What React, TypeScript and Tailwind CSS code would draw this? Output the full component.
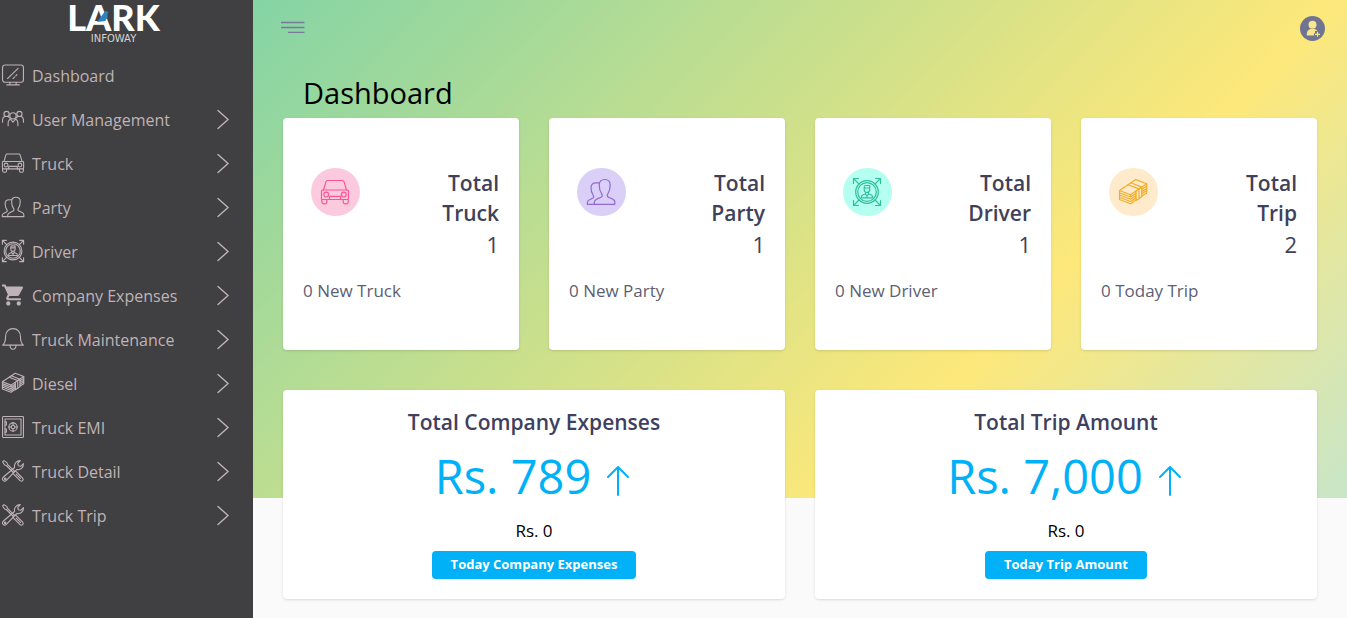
import type { ReactNode } from "react";
import { MdShoppingCart } from "react-icons/md";

type IconName =
  | "monitor"
  | "group"
  | "car"
  | "users"
  | "driver"
  | "cart"
  | "bell"
  | "money"
  | "safe"
  | "tools";

const drawings: Record<Exclude<IconName, "cart">, ReactNode> = {
  monitor: (
    <>
      <rect x="0.7" y="1.2" width="26.6" height="22" rx="3.2" />
      <path d="M10 23.4v3M18 23.4v3M6 26.6h16M7 18.5 20.5 5.5M14 18.5l2.2-2.2M17.5 15l1.5-1.5" />
    </>
  ),
  group: (
    <>
      <circle cx="14" cy="10" r="4" />
      <path d="M7.800 22.500v-3c0-3 1.600-5 4-5.700M20.200 22.500v-3c0-3-1.600-5-4-5.700" />
      <path d="M10.500 14 14 18l3.500-4" />
      <circle cx="5.800" cy="7.600" r="3.300" />
      <circle cx="22.200" cy="7.600" r="3.300" />
      <path d="M.7 18v-3c0-2.300 1.200-3.700 3-4.400M27.300 18v-3c0-2.300-1.200-3.700-3-4.400M7.700 10.500l2 2M20.300 10.500l-2 2" />
    </>
  ),
  car: (
    <>
      <path d="M2.500 12 5 3.700Q5.500 2.500 6.500 2.500h15q1 0 1.500 1.200L25.500 12" />
      <rect x="0.500" y="12" width="27" height="9.500" rx="1" />
      <circle cx="5.200" cy="16.600" r="2.400" />
      <circle cx="22.800" cy="16.600" r="2.400" />
      <path d="M8.500 21.500v-3.200h11v3.200M.8 21.500V24q0 1.800 1.800 1.800H4q1.800 0 1.800-1.800v-2.500M22.200 21.500V24q0 1.800 1.800 1.800h1.400q1.800 0 1.800-1.800v-2.500" />
    </>
  ),
  users: (
    <>
      <path d="M7.300 26.300h20.500V24c0-1.700-1-2.500-2.800-3.200l-3.500-1.600c-1.500-.7-1.500-2.200-.7-3.400 1.700-2.300 2.400-5.300 2.400-8.800 0-3.700-2-5.500-5.500-5.500S12.200 3.300 12.200 7c0 3.500.8 6.500 2.500 8.800.8 1.200.7 2.700-.7 3.400l-3.700 1.700c-1.900.9-3 1.600-3 3.300z" />
      <path d="M7.300 26.300H.4v-1.800c0-1.500.8-2.200 2.600-3l2.600-1.200c1.400-.8 1.400-1.800.4-3.300-1.200-2-2-4.500-2-7.200 0-3.300 2-5 5.200-5h3" />
    </>
  ),
  driver: (
    <>
      <circle cx="14" cy="14" r="11.300" />
      <circle cx="14" cy="14" r="9.300" />
      <path d="M6 6 .7.7M.5 5.500v-5h5M22 6 27.300.7M22.500.5h5v5M6 22 .7 27.300M.5 22.500v5h5M22 22l5.300 5.300M27.500 22.500v5h-5" />
      <path d="M11.200 11.500V9q0-1.500 1.500-1.500h4V11.500q0 2.800-2.800 2.800t-2.700-2.800zM11.200 10h5.500M12.500 14v2M15.500 14v2M8.500 19.800v-1q0-1.600 1.500-2l2.500-.8L14 18l1.500-2 2.500.8q1.500.4 1.500 2v1zM14 18v1.800" />
    </>
  ),
  bell: (
    <>
      <path d="M.8 21.800C3.500 19.500 4.500 17 4.500 11c0-6 3.900-10.200 9.500-10.200S23.500 5 23.500 11c0 6 1 8.500 3.700 10.800z" />
      <path d="M10.200 22c0 3.300 1.300 5 3.800 5s3.800-1.700 3.800-5" />
    </>
  ),
  money: (
    <>
      <path d="M.5 12.500 16.800 1.600 27.700 5.800 11.500 16.700z" />
      <path d="M9 6.700l11 4.200v10M11.800 4.800l11 4.300v9.500l-3 2.200M20 10.900l2.800-1.800M17 13v9.500l2.800-1.700" />
      <path d="M.5 12.500v2.300L11.500 19l5.500-3.700M.5 14.800V17l11 4.300 5.500-3.700M.5 17v2.200l11 4.300L17 19.800M.5 19.200v2.300l11 4.300L17 22M11.500 16.700v2.300" />
      <path d="M27.700 5.800v2.300L23 11.200M27.700 8.100v2.300L23 13.500M27.700 10.400v2.200L23 15.800M27.700 12.600v2.300L23 18" />
    </>
  ),
  safe: (
    <>
      <rect x="0.700" y="0.700" width="26.600" height="26.600" rx="1" />
      <rect x="3.800" y="3.800" width="20.400" height="20.400" />
      <circle cx="14" cy="14" r="5.300" />
      <circle cx="14" cy="14" r="2.300" />
      <path d="M14 8.700v3M14 16.300v3M8.700 14h3M16.300 14h3M3.800 7.500h1.800v4H3.800M3.800 16.500h1.800v4H3.800" />
    </>
  ),
  tools: (
    <>
      <path d="M.8 2.500 2.500.8l3.800 2.500.7 2.200 9 9M.8 2.500l2.500 3.800 2.200.7 9 9" />
      <path d="M15.500 14.500q1.500-.8 2.500.2l8.300 8.300q1.500 1.700 0 3.300t-3.300 0L14.700 18q-1-1-.2-2.500M18 18l5.500 5.500" />
      <path d="M16 9.500C15 5 18 .8 23.300.8L20 4.200l.8 3 3 .8 3.500-3.300c.2 5-3.800 8.500-8.600 7.400L5.500 26q-2 1.800-4 0t0-4z" />
      <circle cx="4" cy="24" r="1" />
    </>
  ),
};

function Icon({ name, className }: { name: IconName; className: string }) {
  if (name === "cart") {
    return (
      <svg viewBox="1 2 21 20" className={className} fill="currentColor" aria-hidden="true">
        <MdShoppingCart size={24} />
      </svg>
    );
  }
  return (
    <svg
      viewBox="0 0 28 28"
      className={className}
      fill="none"
      stroke="currentColor"
      strokeLinejoin="round"
      strokeLinecap="round"
      aria-hidden="true"
    >
      {drawings[name]}
    </svg>
  );
}

const menu: { label: string; icon: IconName; nested: boolean }[] = [
  { label: "Dashboard", icon: "monitor", nested: false },
  { label: "User Management", icon: "group", nested: true },
  { label: "Truck", icon: "car", nested: true },
  { label: "Party", icon: "users", nested: true },
  { label: "Driver", icon: "driver", nested: true },
  { label: "Company Expenses", icon: "cart", nested: true },
  { label: "Truck Maintenance", icon: "bell", nested: true },
  { label: "Diesel", icon: "money", nested: true },
  { label: "Truck EMI", icon: "safe", nested: true },
  { label: "Truck Detail", icon: "tools", nested: true },
  { label: "Truck Trip", icon: "tools", nested: true },
];

const stats: { subject: string; value: number; note: string; icon: IconName; tone: string }[] = [
  { subject: "Truck", value: 1, note: "0 New Truck", icon: "car", tone: "bg-[#fbcbdd] text-[#fb5597]" },
  { subject: "Party", value: 1, note: "0 New Party", icon: "users", tone: "bg-[#dacff6] text-[#9368cf]" },
  { subject: "Driver", value: 1, note: "0 New Driver", icon: "driver", tone: "bg-[#b5fff0] text-[#2fbf9c]" },
  { subject: "Trip", value: 2, note: "0 Today Trip", icon: "money", tone: "bg-[#ffebcb] text-[#efae2c]" },
];

const totals = [
  { title: "Total Company Expenses", amount: "Rs. 789", today: "Rs. 0", action: "Today Company Expenses" },
  { title: "Total Trip Amount", amount: "Rs. 7,000", today: "Rs. 0", action: "Today Trip Amount" },
];

function Logo() {
  return (
    <a href="#" className="flex h-[54px] flex-col items-center pr-[26px] text-white">
      <span className="relative font-[Lato,sans-serif] text-[36px] leading-[34px] font-black">
        LARK
        <svg viewBox="0 0 12 13" className="absolute top-[10px] left-[30px] h-[13px] w-[12px]" aria-hidden="true">
          <path d="M0 12 6 4 8.500.5l1.500 1 2 .5-1.500 1.500.2 3.500-2.500 4-3.500.5z" fill="#2e82bd" />
        </svg>
      </span>
      <span className="font-['DejaVu_Sans',sans-serif] text-[10px] leading-[10px] text-[#d5d5d5]">INFOWAY</span>
    </a>
  );
}

function Sidebar() {
  return (
    <aside className="w-[253px] shrink-0 bg-[#403f41] text-[#bfb3b7]">
      <Logo />
      <nav>
        <ul>
          {menu.map((item) => (
            <li key={item.label}>
              <a href="#" className="flex h-11 items-center gap-2 pr-6 pl-[2px] text-[16px]">
                <Icon name={item.icon} className="mb-[2px] size-[22px] overflow-visible stroke-[1.4]" />
                <span className="flex-1">{item.label}</span>
                {item.nested && (
                  <svg
                    viewBox="0 0 12 20"
                    className="h-5 w-3 overflow-visible"
                    fill="none"
                    stroke="currentColor"
                    strokeWidth="1.400"
                    strokeLinecap="round"
                    aria-hidden="true"
                  >
                    <path d="M1 .5 11 9.500 1 18.500" />
                  </svg>
                )}
              </a>
            </li>
          ))}
        </ul>
      </nav>
    </aside>
  );
}

function Header() {
  return (
    <header className="flex h-14 items-center justify-between pr-[22px] pl-7">
      <button type="button" aria-label="Toggle menu">
        <svg viewBox="0 0 24 12" className="mb-[2px] h-3 w-6" stroke="#79799b" strokeWidth="1.300" aria-hidden="true">
          <path d="M0 1.500h23.500M0 6.500h23.500M7 11.500h16.500" />
        </svg>
      </button>
      <button type="button" aria-label="Account">
        <svg viewBox="0 0 25 25" className="size-[25px]" aria-hidden="true">
          <circle cx="12.500" cy="12.500" r="12.500" fill="#6f7492" />
          <circle cx="12.500" cy="8.800" r="4" fill="#f8e68a" />
          <path d="M6.800 19.500v-1.500c0-3 1.800-4.700 4-5h3.400c1.500.3 2.500.9 3.200 2h-2.400v2.300H14v2.200z" fill="#f8e68a" />
          <path d="M17.500 15.800v5M15 18.300h5" stroke="#f8e68a" strokeWidth="1.200" />
        </svg>
      </button>
    </header>
  );
}

export default function App() {
  return (
    <div className="flex min-h-screen bg-[#fafafa] font-['Open_Sans','Noto_Sans',sans-serif]">
      <Sidebar />
      <div className="min-w-0 flex-1 bg-[linear-gradient(135deg,#84d4a5,#fde87a_68%,#c8e6c9)] bg-[length:100%_498px] bg-no-repeat">
        <Header />
        <main className="px-[30px] pt-[19px] pb-[18px]">
          <h1 className="mb-[7px] pl-5 text-[29px] leading-9 text-black">Dashboard</h1>
          <section className="grid grid-cols-4 gap-[30px]">
            {stats.map((stat) => (
              <article key={stat.subject} className="rounded bg-white px-5 pt-[50px] pb-[47px] text-[#3f4159] shadow-sm">
                <div className="flex items-start justify-between">
                  <div className={`ml-2 flex h-12 w-[49px] items-center justify-center rounded-full pr-px ${stat.tone}`}>
                    <Icon name={stat.icon} className="size-7 overflow-visible stroke-[1.2]" />
                  </div>
                  <div className="text-right">
                    <h2 className="text-[21px] leading-[30px] font-semibold">
                      Total
                      <br />
                      {stat.subject}
                    </h2>
                    <p className="text-[22px] leading-8">{stat.value}</p>
                  </div>
                </div>
                <p className="mt-[19px] text-[17px] leading-6 text-[#5d5f72]">{stat.note}</p>
              </article>
            ))}
          </section>
          <section className="mt-10 grid grid-cols-2 gap-[30px]">
            {totals.map((total) => (
              <article key={total.title} className="flex flex-col items-center rounded bg-white pt-4 pb-5 shadow-sm">
                <h2 className="text-[21px] leading-8 font-semibold text-[#3f4060]">{total.title}</h2>
                <p className="mt-[2px] flex items-center gap-4 pr-1 text-[47px] leading-[72px] text-[#00b1f7]">
                  {total.amount}
                  <svg
                    viewBox="0 0 22 30"
                    className="mt-[10px] h-[30px] w-[22px] overflow-visible"
                    fill="none"
                    stroke="currentColor"
                    strokeWidth="2"
                    strokeLinecap="round"
                    strokeLinejoin="round"
                    aria-hidden="true"
                  >
                    <path d="M11 29V1M1 11 11 1l10 10" />
                  </svg>
                </p>
                <p className="mt-[7px] text-[17px] leading-6 font-medium text-black">{total.today}</p>
                <button type="button" className="mt-2 h-7 rounded bg-[#00b1f7] px-[19px] text-[13px] font-bold text-white">
                  {total.action}
                </button>
              </article>
            ))}
          </section>
        </main>
      </div>
    </div>
  );
}
